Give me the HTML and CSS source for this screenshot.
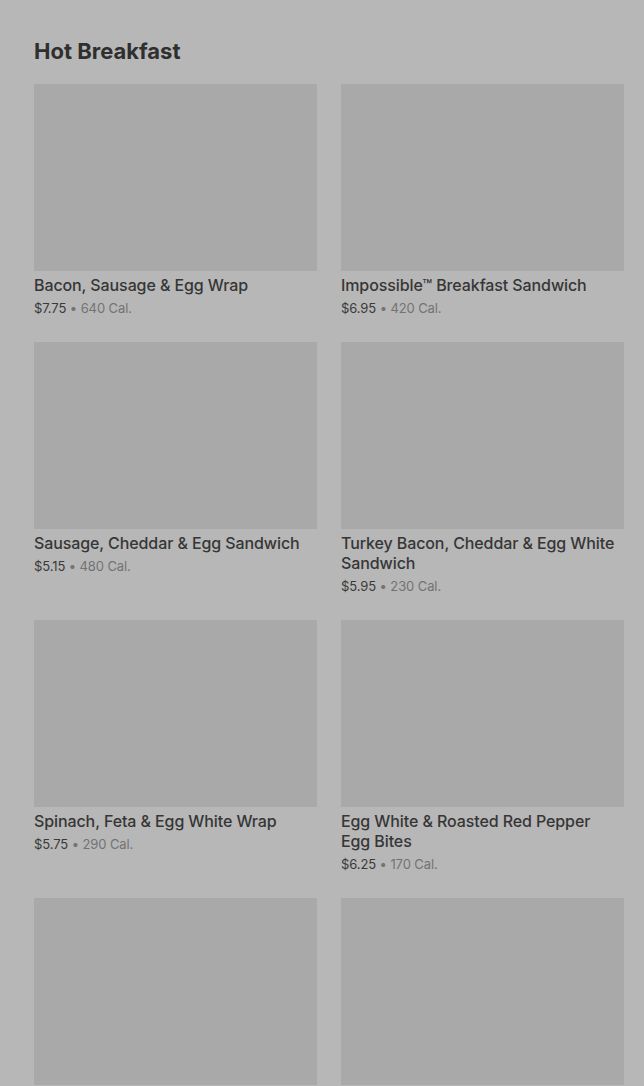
FILE: index.html
```html
<!DOCTYPE html>
<html lang="en">
<head>
<meta charset="utf-8">
<title>Hot Breakfast</title>
<link rel="stylesheet" href="styles.css">
</head>
<body>
<main class="section">
  <h2 class="heading">Hot Breakfast</h2>
  <div class="grid">
    <div class="card">
      <div class="thumb"></div>
      <div class="title">Bacon, Sausage &amp; Egg Wrap</div>
      <div class="meta"><span class="price">$7.75</span> <span class="dot">•</span> <span class="cal">640 Cal.</span></div>
    </div>
    <div class="card">
      <div class="thumb"></div>
      <div class="title">Impossible™ Breakfast Sandwich</div>
      <div class="meta"><span class="price">$6.95</span> <span class="dot">•</span> <span class="cal">420 Cal.</span></div>
    </div>
    <div class="card">
      <div class="thumb"></div>
      <div class="title">Sausage, Cheddar &amp; Egg Sandwich</div>
      <div class="meta"><span class="price">$5.15</span> <span class="dot">•</span> <span class="cal">480 Cal.</span></div>
    </div>
    <div class="card">
      <div class="thumb"></div>
      <div class="title">Turkey Bacon, Cheddar &amp; Egg White Sandwich</div>
      <div class="meta"><span class="price">$5.95</span> <span class="dot">•</span> <span class="cal">230 Cal.</span></div>
    </div>
    <div class="card">
      <div class="thumb"></div>
      <div class="title">Spinach, Feta &amp; Egg White Wrap</div>
      <div class="meta"><span class="price">$5.75</span> <span class="dot">•</span> <span class="cal">290 Cal.</span></div>
    </div>
    <div class="card">
      <div class="thumb"></div>
      <div class="title">Egg White &amp; Roasted Red Pepper Egg Bites</div>
      <div class="meta"><span class="price">$6.25</span> <span class="dot">•</span> <span class="cal">170 Cal.</span></div>
    </div>
    <div class="card">
      <div class="thumb"></div>
    </div>
    <div class="card">
      <div class="thumb"></div>
    </div>
  </div>
</main>
</body>
</html>
```
FILE: styles.css
```css
html, body {
  margin: 0;
  padding: 0;
  background: #b7b7b7;
}
body {
  font-family: Inter, "Liberation Sans", Arial, sans-serif;
  color: #333333;
  overflow: hidden;
}
.section {
  padding: 37px 20px 0 34px;
}
.heading {
  margin: 0 0 19px 0;
  font-size: 22px;
  line-height: 28px;
  font-weight: 700;
  letter-spacing: 0;
  color: #2f2f2f;
}
.grid {
  display: grid;
  grid-template-columns: 1fr 1fr;
  column-gap: 24px;
  row-gap: 24px;
}
.card {
  display: flex;
  flex-direction: column;
}
.thumb {
  height: 187px;
  background: #a9a9a9;
}
.title {
  margin-top: 4px;
  padding-right: 8px;
  font-size: 16px;
  line-height: 20px;
  font-weight: 500;
  color: #363636;
  letter-spacing: -0.1px;
}
.meta {
  margin-top: 3px;
  font-size: 13px;
  line-height: 20px;
  color: #737373;
  letter-spacing: -0.1px;
}
.price {
  color: #3a3a3a;
}
.dot {
  color: #737373;
}
```
